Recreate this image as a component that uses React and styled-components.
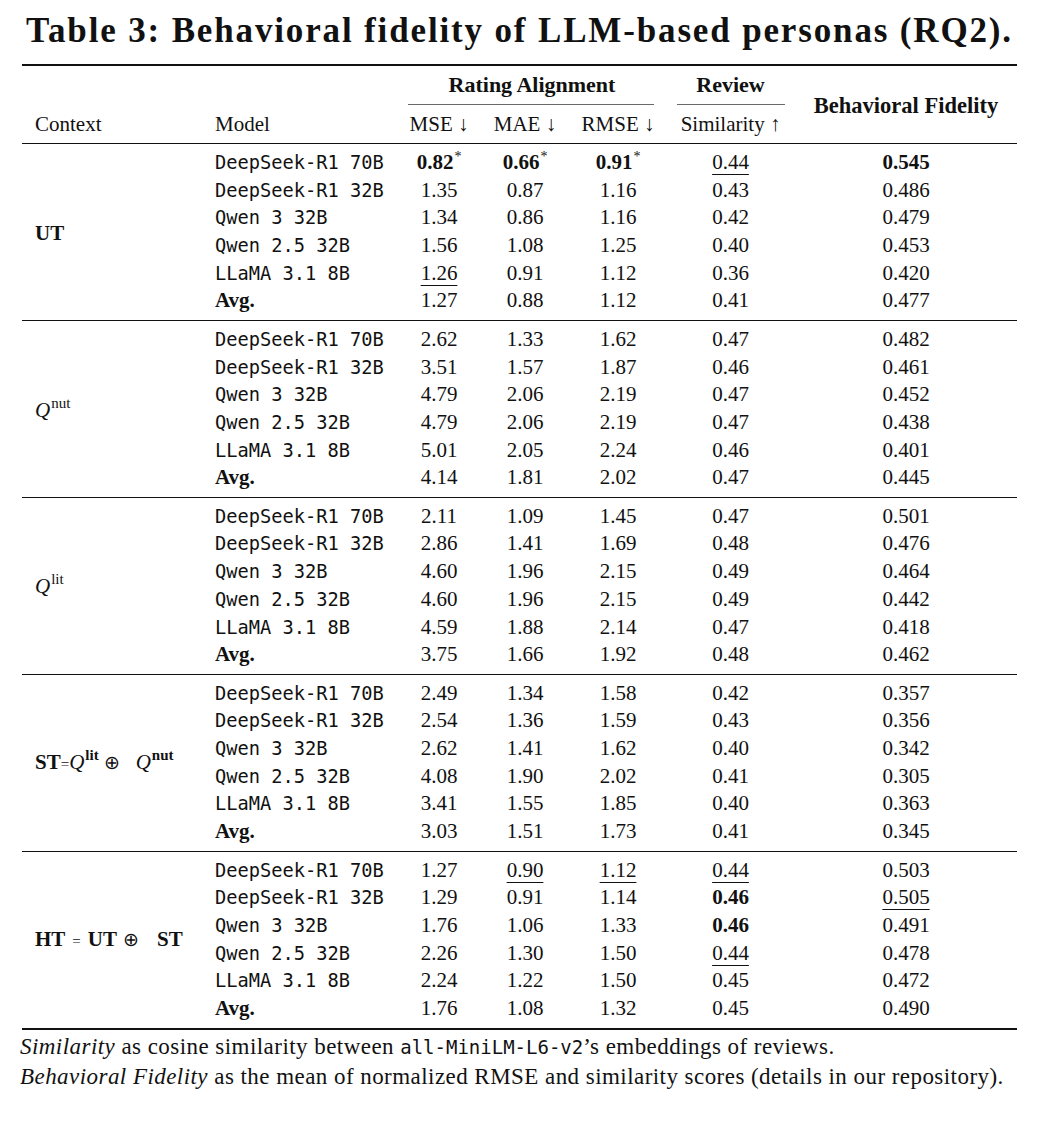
import React from 'react';
import styled, { createGlobalStyle } from 'styled-components';

const GlobalStyle = createGlobalStyle`
  html, body {
    margin: 0;
    padding: 0;
    background: #fff;
  }
  body {
    font-family: 'Liberation Serif', 'Times New Roman', serif;
    color: #111;
  }
`;

const COLS = '181px 195px 82px 90px 96px 129px 222px';

const Page = styled.div`
  width: 1038px;
  height: 1142px;
  padding: 12px 0 0 22px;
  box-sizing: border-box;
`;

const Caption = styled.h2`
  margin: 0 0 14px;
  width: 995px;
  text-align: center;
  font-size: 35px;
  letter-spacing: 1.85px;
  line-height: 38px;
  font-weight: 700;
  white-space: nowrap;
`;

const Table = styled.div`
  width: 995px;
  border-top: 2px solid #111;
  border-bottom: 2px solid #111;
`;

const Head = styled.div`
  display: grid;
  grid-template-columns: ${COLS};
  grid-template-rows: 39px 38px;
  font-size: 21px;
`;

const HeadCell = styled.div`
  grid-row: ${(p) => p.$row || 'auto'};
  display: flex;
  align-items: center;
  justify-content: ${(p) => (p.$left ? 'flex-start' : 'center')};
  padding-left: ${(p) => p.$pad || 0}px;
  padding-top: ${(p) => (p.$row === 2 ? 0 : 4)}px;
  font-weight: ${(p) => (p.$bold ? 700 : 400)};
  font-size: ${(p) => (p.$bold ? '22.5px' : '21px')};
  white-space: nowrap;
`;

const GroupTitle = styled.div`
  grid-column: ${(p) => p.$cols};
  grid-row: 1;
  display: flex;
  flex-direction: column;
  justify-content: flex-end;
  align-items: stretch;
  font-weight: 700;
  font-size: 22px;
  text-align: center;
`;

const GroupLabel = styled.div`
  padding-bottom: 7px;
  line-height: 24px;
`;

const CMidRule = styled.div`
  height: 1px;
  background: #6a6a6a;
  margin: 0 ${(p) => p.$right}px 0 ${(p) => p.$left}px;
`;

const SpanCell = styled(HeadCell)`
  grid-column: 7;
  grid-row: 1 / span 2;
  padding-top: 2px;
`;

const Group = styled.div`
  display: grid;
  grid-template-columns: ${COLS};
  grid-auto-rows: 27.7px;
  padding: 4.6px 0 5.2px;
  border-top: ${(p) => (p.$first ? '1.4px' : '1px')} solid #111;
  font-size: 21px;
`;

const ContextCell = styled.div`
  grid-column: 1;
  grid-row: 1 / span 6;
  display: flex;
  align-items: center;
  padding-left: 13px;
  padding-top: 2px;
  white-space: nowrap;
`;

const ModelCell = styled.div`
  grid-column: 2;
  display: flex;
  align-items: center;
  padding-left: 12px;
  font-family: ${(p) => (p.$avg ? "'Liberation Serif', serif" : "'DejaVu Sans Mono', monospace")};
  font-size: ${(p) => (p.$avg ? '21px' : '18.7px')};
  font-weight: ${(p) => (p.$avg ? 700 : 400)};
  white-space: pre;
`;

const Num = styled.div`
  display: flex;
  align-items: center;
  justify-content: center;
  white-space: nowrap;
`;

const NumText = styled.span`
  font-weight: ${(p) => (p.$bold ? 700 : 400)};
  text-decoration: ${(p) => (p.$under ? 'underline' : 'none')};
  text-decoration-thickness: 1px;
  text-underline-offset: 5px;
`;

const Star = styled.sup`
  font-size: 14px;
  font-weight: 400;
  vertical-align: 8px;
  line-height: 0;
  margin-left: 1px;
`;

const Label = styled.span`
  display: inline-block;
  line-height: 24px;
`;

const B = styled.b`
  font-weight: 700;
`;

const Q = styled.i`
  font-style: italic;
`;

const Sup = styled.sup`
  font-size: 15px;
  font-weight: ${(p) => (p.$bold ? 700 : 400)};
  vertical-align: 9px;
  line-height: 0;
  margin-left: 1px;
`;

const Op = styled.span`
  font-family: 'DejaVu Sans', sans-serif;
  font-size: 19px;
  font-weight: 300;
  margin: 0 ${(p) => p.$r || 4}px 0 ${(p) => p.$l || 4}px;
`;

const Eq = styled.span`
  font-size: 15px;
  margin: 0 ${(p) => p.$m || 0}px;
`;

const Notes = styled.div`
  padding: 2px 0 0 0;
  margin-left: -2px;
  font-size: 23px;
  letter-spacing: 0.45px;
  line-height: 29px;
  white-space: nowrap;
`;

const Mono = styled.span`
  font-family: 'DejaVu Sans Mono', monospace;
  font-size: 19px;
  letter-spacing: 0;
`;

const MODELS = ['DeepSeek-R1 70B', 'DeepSeek-R1 32B', 'Qwen 3 32B', 'Qwen 2.5 32B', 'LLaMA 3.1 8B'];

// each value: plain string, or [text, flags] where flags: b bold, u underline, s star
const groups = [
  {
    label: <B>UT</B>,
    rows: [
      [['0.82', 'bs'], ['0.66', 'bs'], ['0.91', 'bs'], ['0.44', 'u'], ['0.545', 'b']],
      ['1.35', '0.87', '1.16', '0.43', '0.486'],
      ['1.34', '0.86', '1.16', '0.42', '0.479'],
      ['1.56', '1.08', '1.25', '0.40', '0.453'],
      [['1.26', 'u'], '0.91', '1.12', '0.36', '0.420'],
      ['1.27', '0.88', '1.12', '0.41', '0.477'],
    ],
  },
  {
    label: (
      <>
        <Q>Q</Q>
        <Sup>nut</Sup>
      </>
    ),
    rows: [
      ['2.62', '1.33', '1.62', '0.47', '0.482'],
      ['3.51', '1.57', '1.87', '0.46', '0.461'],
      ['4.79', '2.06', '2.19', '0.47', '0.452'],
      ['4.79', '2.06', '2.19', '0.47', '0.438'],
      ['5.01', '2.05', '2.24', '0.46', '0.401'],
      ['4.14', '1.81', '2.02', '0.47', '0.445'],
    ],
  },
  {
    label: (
      <>
        <Q>Q</Q>
        <Sup>lit</Sup>
      </>
    ),
    rows: [
      ['2.11', '1.09', '1.45', '0.47', '0.501'],
      ['2.86', '1.41', '1.69', '0.48', '0.476'],
      ['4.60', '1.96', '2.15', '0.49', '0.464'],
      ['4.60', '1.96', '2.15', '0.49', '0.442'],
      ['4.59', '1.88', '2.14', '0.47', '0.418'],
      ['3.75', '1.66', '1.92', '0.48', '0.462'],
    ],
  },
  {
    label: (
      <>
        <B>ST</B>
        <Eq>=</Eq>
        <Q>Q</Q>
        <Sup $bold>lit</Sup>
        <Op $l={5} $r={16}>⊕</Op>
        <Q>Q</Q>
        <Sup $bold>nut</Sup>
      </>
    ),
    rows: [
      ['2.49', '1.34', '1.58', '0.42', '0.357'],
      ['2.54', '1.36', '1.59', '0.43', '0.356'],
      ['2.62', '1.41', '1.62', '0.40', '0.342'],
      ['4.08', '1.90', '2.02', '0.41', '0.305'],
      ['3.41', '1.55', '1.85', '0.40', '0.363'],
      ['3.03', '1.51', '1.73', '0.41', '0.345'],
    ],
  },
  {
    label: (
      <>
        <B>HT</B>
        <Eq $m={7}>=</Eq>
        <B>UT</B>
        <Op $l={6} $r={18}>⊕</Op>
        <B>ST</B>
      </>
    ),
    rows: [
      ['1.27', ['0.90', 'u'], ['1.12', 'u'], ['0.44', 'u'], '0.503'],
      ['1.29', '0.91', '1.14', ['0.46', 'b'], ['0.505', 'u']],
      ['1.76', '1.06', '1.33', ['0.46', 'b'], '0.491'],
      ['2.26', '1.30', '1.50', ['0.44', 'u'], '0.478'],
      ['2.24', '1.22', '1.50', '0.45', '0.472'],
      ['1.76', '1.08', '1.32', '0.45', '0.490'],
    ],
  },
];

function Value({ v }) {
  const [text, flags] = Array.isArray(v) ? v : [v, ''];
  return (
    <Num>
      <span>
        <NumText $bold={flags.includes('b')} $under={flags.includes('u')}>
          {text}
        </NumText>
        {flags.includes('s') && <Star>*</Star>}
      </span>
    </Num>
  );
}

export default function App() {
  return (
    <>
      <GlobalStyle />
      <Page>
        <Caption>Table 3: Behavioral fidelity of LLM-based personas (RQ2).</Caption>
        <Table>
          <Head>
            <GroupTitle $cols="3 / span 3">
              <GroupLabel>Rating Alignment</GroupLabel>
              <CMidRule $left={10} $right={12} />
            </GroupTitle>
            <GroupTitle $cols="6">
              <GroupLabel>Review</GroupLabel>
              <CMidRule $left={11} $right={10} />
            </GroupTitle>
            <SpanCell $bold>Behavioral Fidelity</SpanCell>
            <HeadCell $row={2} $left $pad={13}>Context</HeadCell>
            <HeadCell $row={2} $left $pad={12}>Model</HeadCell>
            <HeadCell $row={2}>MSE ↓</HeadCell>
            <HeadCell $row={2}>MAE ↓</HeadCell>
            <HeadCell $row={2}>RMSE ↓</HeadCell>
            <HeadCell $row={2}>Similarity ↑</HeadCell>
          </Head>
          {groups.map((g, gi) => (
            <Group key={gi} $first={gi === 0}>
              <ContextCell>
                <Label>{g.label}</Label>
              </ContextCell>
              {g.rows.map((row, ri) => (
                <React.Fragment key={ri}>
                  <ModelCell $avg={ri === 5}>{ri === 5 ? 'Avg.' : MODELS[ri]}</ModelCell>
                  {row.map((v, vi) => (
                    <Value key={vi} v={v} />
                  ))}
                </React.Fragment>
              ))}
            </Group>
          ))}
        </Table>
        <Notes>
          <div>
            <i>Similarity</i> as cosine similarity between <Mono>all-MiniLM-L6-v2</Mono>’s embeddings of reviews.
          </div>
          <div>
            <i>Behavioral Fidelity</i> as the mean of normalized RMSE and similarity scores (details in our repository).
          </div>
        </Notes>
      </Page>
    </>
  );
}
